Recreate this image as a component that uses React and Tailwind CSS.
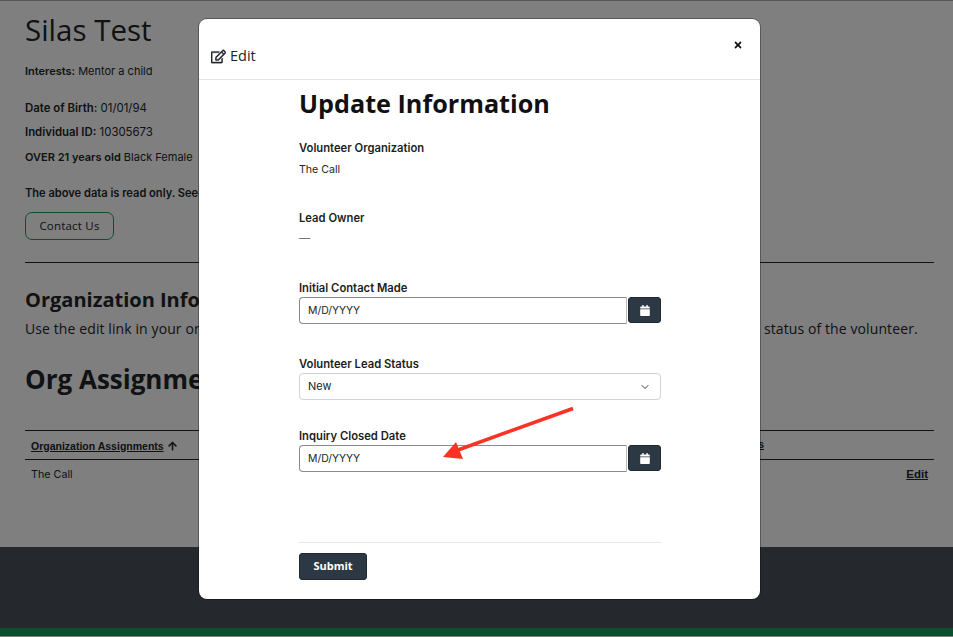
import React from "react";
import { FaRegEdit, FaCalendar, FaArrowUp, FaTimes } from "react-icons/fa";
import { LuChevronDown } from "react-icons/lu";

const open = "font-['Open_Sans',sans-serif]";
const inter = "font-['Inter',sans-serif]";

function DateField({ label, className }) {
  return (
    <div className={className}>
      <div className="text-[11.25px] leading-[14px] font-semibold text-[#1b1e21]">{label}</div>
      <div className="mt-[2px] flex gap-[1px]">
        <div className="flex h-[27px] w-[328px] items-center rounded-l-[4px] border border-[#8b8b8b] border-r-[#bbbbbb] pl-[8px] text-[10.4px] text-[#212529]">
          M/D/YYYY
        </div>
        <button className="flex h-[26px] w-[33px] items-center justify-center rounded-[3px] border border-[#1f2a33] bg-[#2c3944] text-white">
          <FaCalendar className="h-[11px] w-[10px]" />
        </button>
      </div>
    </div>
  );
}

export default function App() {
  return (
    <div className={`relative flex h-[637px] w-[953px] flex-col overflow-hidden bg-white ${inter} text-[#212529]`}>
      <div className="h-[1px] bg-[#b0b0b0]" />
      <main className="h-[546px] pr-[19px] pl-[25px]">
        <h1 className={`${open} mt-[8px] text-[29.5px] leading-[41px] font-normal`}>Silas Test</h1>
        <p className="mt-[14px] text-[11px] leading-[14px]"><b className="font-semibold">Interests:</b> Mentor a child</p>
        <p className="mt-[23px] text-[11.4px] leading-[14px]"><b className="font-semibold">Date of Birth:</b> 01/01/94</p>
        <p className="mt-[10px] text-[11.4px] leading-[14px]"><b className="font-semibold">Individual ID:</b> 10305673</p>
        <p className="mt-[11px] text-[11px] leading-[14px]"><b className="font-semibold">OVER 21 years old</b> Black Female</p>
        <p className="mt-[22px] text-[11.1px] leading-[14px] font-semibold">The above data is read only. See an error? Contact us to correct it.</p>
        <button className={`${open} mt-[12px] flex h-[28px] w-[89px] items-center justify-center rounded-[7px] border border-[#169f60] text-[11.5px] tracking-[0.2px]`}>Contact Us</button>
        <hr className="mt-[22px] border-[#212529]" />
        <h2 className={`${open} mt-[26px] text-[20px] leading-[22px] font-bold`}>Organization Information</h2>
        <p className={`${open} mt-[8px] whitespace-nowrap text-[14px] leading-[20px] tracking-[0.1px]`}>Use the edit link in your organization assignments section below to update the contact information and referral status of the volunteer.</p>
        <h2 className={`${open} mt-[22px] text-[26px] leading-[36px] font-bold`}>Org Assignments</h2>
        <table className="mt-[33px] w-full border-y border-[#212529]">
          <thead>
            <tr className="h-[29px] border-b border-[#212529]">
              <th className="pb-[3px] pl-[6px] text-left font-bold">
                <span className="inline-flex items-center gap-[4px] font-['Liberation_Sans',sans-serif] text-[10.5px] underline">Organization Assignments <FaArrowUp className="h-[10px] w-[9px]" /></span>
              </th>
              <th className="pr-[170px] text-right font-['Liberation_Sans',sans-serif] text-[10.5px] font-bold underline">Status</th>
            </tr>
          </thead>
        </table>
        <div className="flex h-[29px] items-center justify-between px-[6px] text-[10.75px]">
          <span className="pt-[2px]">The Call</span>
          <a className="font-['Liberation_Sans',sans-serif] text-[11.5px] font-bold underline">Edit</a>
        </div>
      </main>
      <footer className="h-[81px] bg-[#4a5158]" />
      <div className="h-[8px] bg-[#169f60]" />
      <div className="h-[1px] bg-white" />

      <div className="absolute inset-0 bg-black/50" />

      <div className="absolute top-[19px] left-[199px] flex h-[580px] w-[561px] flex-col rounded-[8px] bg-white ring-1 ring-black/30">
        <header className="relative flex h-[61px] items-end border-b border-[#e5e5e5] px-[12px] pb-[13px]">
          <div className={`${open} flex items-center gap-[4px] text-[14.5px] leading-[20px] text-[#212529]`}>
            <FaRegEdit className="h-[15px] w-[15px]" stroke="currentColor" strokeWidth={12} />
            <span>Edit</span>
          </div>
          <FaTimes className="absolute top-[21px] right-[17px] h-[10px] w-[10px] text-[#111]" />
        </header>
        <div className="flex flex-1 flex-col pr-[99px] pl-[100px]">
          <h2 className={`${open} mt-[6px] text-[25.2px] leading-[34px] font-bold text-[#111]`}>Update Information</h2>
          <div className="mt-[21px] text-[11.25px] leading-[14px] font-semibold text-[#1b1e21]">Volunteer Organization</div>
          <div className="mt-[8px] text-[10.6px] leading-[14px]">The Call</div>
          <div className="mt-[34px] text-[11.25px] leading-[14px] font-semibold text-[#1b1e21]">Lead Owner</div>
          <div className="mt-[6px] text-[11.25px] leading-[14px] text-[#777]">—</div>
          <DateField label="Initial Contact Made" className="mt-[36px]" />
          <div className="mt-[33px] text-[11.25px] leading-[14px] font-semibold text-[#1b1e21]">Volunteer Lead Status</div>
          <div className="mt-[2px] flex h-[27px] items-center justify-between rounded-[4px] border border-[#ced4da] pr-[9px] pl-[8px] text-[11px]">
            New
            <LuChevronDown className="h-[12px] w-[12px] text-[#343a40]" />
          </div>
          <DateField label="Inquiry Closed Date" className="mt-[29px]" />
          <hr className="mt-[70px] border-[#e9e9e9]" />
          <button className={`${open} mt-[10px] h-[27px] w-[68px] rounded-[3px] border border-[#1f2a33] bg-[#2c3944] text-[11px] font-bold text-white`}>Submit</button>
        </div>
      </div>

      <svg className="absolute top-[400px] left-[436px]" width="144" height="70" viewBox="0 0 144 70" fill="none">
        <line x1="137" y1="8.5" x2="22" y2="50" stroke="#fb3324" strokeWidth="3.5" />
        <polygon points="7,57 20,42 27,59" fill="#fb3324" />
      </svg>
    </div>
  );
}
